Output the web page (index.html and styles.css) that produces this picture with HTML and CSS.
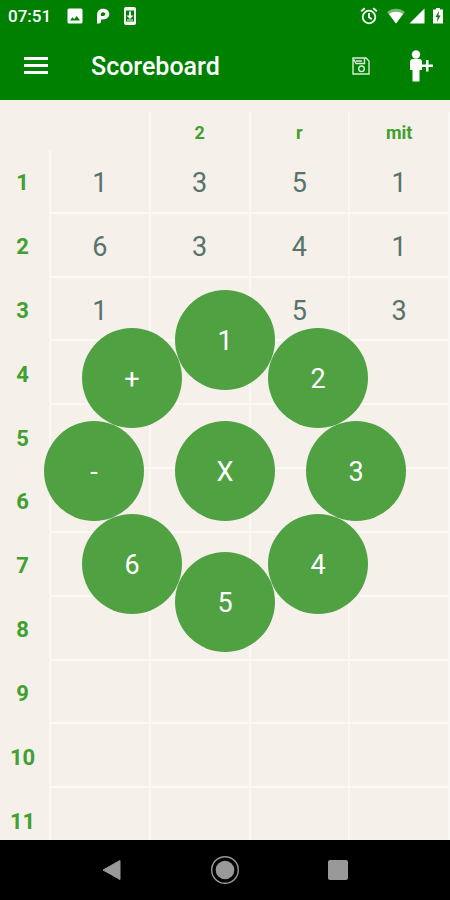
FILE: index.html
```html
<!DOCTYPE html>
<html lang="en">
<head>
<meta charset="utf-8">
<meta name="viewport" content="width=device-width, initial-scale=1">
<title>Scoreboard</title>
<link rel="stylesheet" href="styles.css">
</head>
<body>
<header class="top">
  <div class="status">
    <time class="clock">07:51</time>
    <svg class="st-image" width="16" height="16" viewBox="0 0 16 16"><path fill="#fff" fill-rule="evenodd" d="M2 0.500h12a1.500 1.500 0 0 1 1.500 1.500v12a1.500 1.500 0 0 1-1.500 1.500h-12a1.500 1.500 0 0 1-1.500-1.500v-12a1.500 1.500 0 0 1 1.500-1.500zM3 12.500h10l-3.300-4.500-2.500 3.200-1.700-2z"/></svg>
    <svg class="st-p" width="14" height="16" viewBox="0 0 14 16"><path fill="#fff" fill-rule="evenodd" d="M1 15.500V7C1 3 3.500.700 7 .700c3.700 0 6.300 2.200 6.300 5.400 0 3.200-2.500 5.300-5.800 5.300H5v1.600c0 1.500-.700 2.500-2 2.500zM5 8h2.300c1.300 0 2-.800 2-1.900S8.500 4.200 7.200 4.200C5.800 4.200 5 5.100 5 6.400z"/></svg>
    <svg class="st-update" width="14" height="20" viewBox="0 0 14 20"><rect x="1" y="1" width="12" height="18" rx="2" fill="#fff"/><path fill="#008000" d="M3 4.500h8v11H3z"/><path fill="#fff" d="M6 5.500h2v4h2.500L7 13 3.500 9.500H6zM4 13.500h6v1H4z"/></svg>
    <span class="grow"></span>
    <svg class="st-alarm" width="18" height="18" viewBox="0 0 18 18" fill="none" stroke="#fff" stroke-width="1.800"><circle cx="9" cy="10" r="6.300"/><path d="M9 6v4.200l2.800 2M1.200 4.200l3.600-3M16.800 4.200l-3.600-3"/></svg>
    <svg class="st-wifi" width="18" height="16" viewBox="0 0 18 16"><path fill="#fff" opacity=".45" d="M0 4C5-.500 13-.500 18 4L9 15.500z"/><path fill="#fff" d="M2 6c4-3 10-3 14 0l-7 9.500z"/></svg>
    <svg class="st-signal" width="16" height="16" viewBox="0 0 16 16"><path fill="#fff" d="M.500 15.500h15V.500z"/></svg>
    <svg class="st-battery" width="12" height="18" viewBox="0 0 12 18"><path fill="#fff" d="M1 2.500h3V1h4v1.500h3v14H1z"/><path fill="#008000" d="M7 4 3.500 10h2l-.500 5 3.500-6.500h-2z"/></svg>
  </div>
  <div class="appbar">
    <button class="menu" type="button" aria-label="Menu"><svg width="26" height="18" viewBox="0 0 26 18"><path fill="#fff" d="M1 0h24v3H1zM1 7h24v3H1zM1 14h24v3H1z"/></svg></button>
    <h1 class="title">Scoreboard</h1>
    <button class="save" type="button" aria-label="Save"><svg width="20" height="20" viewBox="0 0 20 20" fill="none" stroke="#fff" stroke-opacity=".85" stroke-width="1.400"><path d="M2 2h13l3 3v13H2zM3 3.500l2 4h8.500V2.500M5 5h6"/><circle cx="10.500" cy="12.800" r="2.800"/></svg></button>
    <button class="add" type="button" aria-label="Add player"><svg width="26" height="34" viewBox="0 0 26 34"><g fill="#fff"><circle cx="8" cy="5.500" r="4.200"/><path d="M5 10h6a3 3 0 0 1 3 3v8h-2.500v11.500h-7V21H2v-8a3 3 0 0 1 3-3z"/><path d="M13 15.500h5V11h2.500v4.500H25V18h-4.500v4.500H18V18h-5z"/></g></svg></button>
  </div>
</header>
<main class="board">
  <table class="scores">
    <thead>
      <tr><td class="corner"></td><th></th><th scope="col">2</th><th scope="col">r</th><th scope="col">mit</th></tr>
    </thead>
    <tbody>
      <tr><th scope="row">1</th><td>1</td><td>3</td><td>5</td><td>1</td></tr>
      <tr><th scope="row">2</th><td>6</td><td>3</td><td>4</td><td>1</td></tr>
      <tr><th scope="row">3</th><td>1</td><td></td><td>5</td><td>3</td></tr>
      <tr><th scope="row">4</th><td></td><td></td><td></td><td></td></tr>
      <tr><th scope="row">5</th><td></td><td></td><td></td><td></td></tr>
      <tr><th scope="row">6</th><td></td><td></td><td></td><td></td></tr>
      <tr><th scope="row">7</th><td></td><td></td><td></td><td></td></tr>
      <tr><th scope="row">8</th><td></td><td></td><td></td><td></td></tr>
      <tr><th scope="row">9</th><td></td><td></td><td></td><td></td></tr>
      <tr><th scope="row">10</th><td></td><td></td><td></td><td></td></tr>
      <tr><th scope="row">11</th><td></td><td></td><td></td><td></td></tr>
    </tbody>
  </table>
  <div class="wheel">
    <button class="key" type="button">X</button>
    <button class="key n" type="button">1</button>
    <button class="key ne" type="button">2</button>
    <button class="key e" type="button">3</button>
    <button class="key se" type="button">4</button>
    <button class="key s" type="button">5</button>
    <button class="key sw" type="button">6</button>
    <button class="key w" type="button">-</button>
    <button class="key nw" type="button">+</button>
  </div>
</main>
<nav class="navbar">
  <button type="button" aria-label="Back"><svg width="30" height="30" viewBox="0 0 30 30"><path fill="#999" stroke="#999" stroke-linejoin="round" d="M6 15 23 5.500v19z"/></svg></button>
  <button type="button" aria-label="Home"><svg width="30" height="30" viewBox="0 0 30 30"><circle cx="15" cy="15" r="13.300" fill="none" stroke="#999" stroke-width="1.400"/><circle cx="15" cy="15" r="9.300" fill="#999"/></svg></button>
  <button type="button" aria-label="Recent apps"><svg width="30" height="30" viewBox="0 0 30 30"><rect x="5" y="5" width="20" height="20" rx="2" fill="#999"/></svg></button>
</nav>
</body>
</html>
```
FILE: styles.css
```css
* { box-sizing: border-box; }

body {
  margin: 0;
  height: 100vh;
  display: flex;
  flex-direction: column;
  font-family: Roboto, "Liberation Sans", sans-serif;
  background: #f5f0ea;
}

button {
  border: 0;
  padding: 0;
  margin: 0;
  background: none;
  font: inherit;
  color: inherit;
}

svg { display: block; }

.top {
  flex: none;
  background: #008000;
  color: #fff;
}

.status {
  display: flex;
  align-items: center;
  height: 32px;
  padding: 0 6px 0 8px;
}

.clock {
  width: 44px;
  margin-right: 15px;
  font-size: 17px;
  font-weight: 500;
}

.st-image { margin-right: 13px; }
.st-p { margin-right: 13px; }
.grow { flex: 1; }
.st-alarm { margin-right: 9px; }
.st-wifi { margin-right: 4px; }
.st-signal { margin-right: 7px; }

.appbar {
  display: flex;
  align-items: center;
  height: 68px;
  padding: 0 16px 0 23px;
}

.menu { margin-right: 42px; }

.title {
  flex: 1;
  margin: 0;
  padding-top: 2px;
  font-size: 25px;
  line-height: 32px;
  font-weight: 500;
}

.save { margin-right: 37px; }

.board {
  position: relative;
  flex: 1;
  min-height: 0;
  overflow: hidden;
  padding-top: 12px;
}

.scores {
  width: 100%;
  height: 740px;
  table-layout: fixed;
  border-collapse: separate;
  border-spacing: 0;
  text-align: center;
}

.scores th,
.scores td {
  padding: 2px 0 0;
  border-right: 2px solid #faf8f4;
}

.scores thead th {
  height: 38px;
  color: #40a030;
  font-size: 18px;
  font-weight: 700;
}

.scores .corner {
  width: 51px;
  border-right: 0;
}

.scores tbody tr { height: 40px; }

.scores tbody th {
  padding-right: 4px;
  color: #40a030;
  font-size: 22px;
  font-weight: 700;
}

.scores tbody td {
  padding-top: 5px;
  border-bottom: 2px solid #fcfaf7;
  color: #58736b;
  font-size: 27px;
}

.wheel {
  position: absolute;
  inset: 0;
  display: grid;
  place-items: center;
  padding-top: 1px;
}

.key {
  grid-area: 1 / 1;
  width: 100px;
  height: 100px;
  padding-top: 3px;
  border-radius: 50%;
  background: #4fa142;
  color: #fff;
  font-size: 27px;
}

.n { transform: translate(0, -131px); }
.ne { transform: translate(93px, -93px); }
.e { transform: translate(131px, 0); }
.se { transform: translate(93px, 93px); }
.s { transform: translate(0, 131px); }
.sw { transform: translate(-93px, 93px); }
.w { transform: translate(-131px, 0); }
.nw { transform: translate(-93px, -93px); }

.navbar {
  flex: none;
  display: flex;
  justify-content: center;
  align-items: center;
  gap: 83px;
  height: 60px;
  background: #000;
}
```
